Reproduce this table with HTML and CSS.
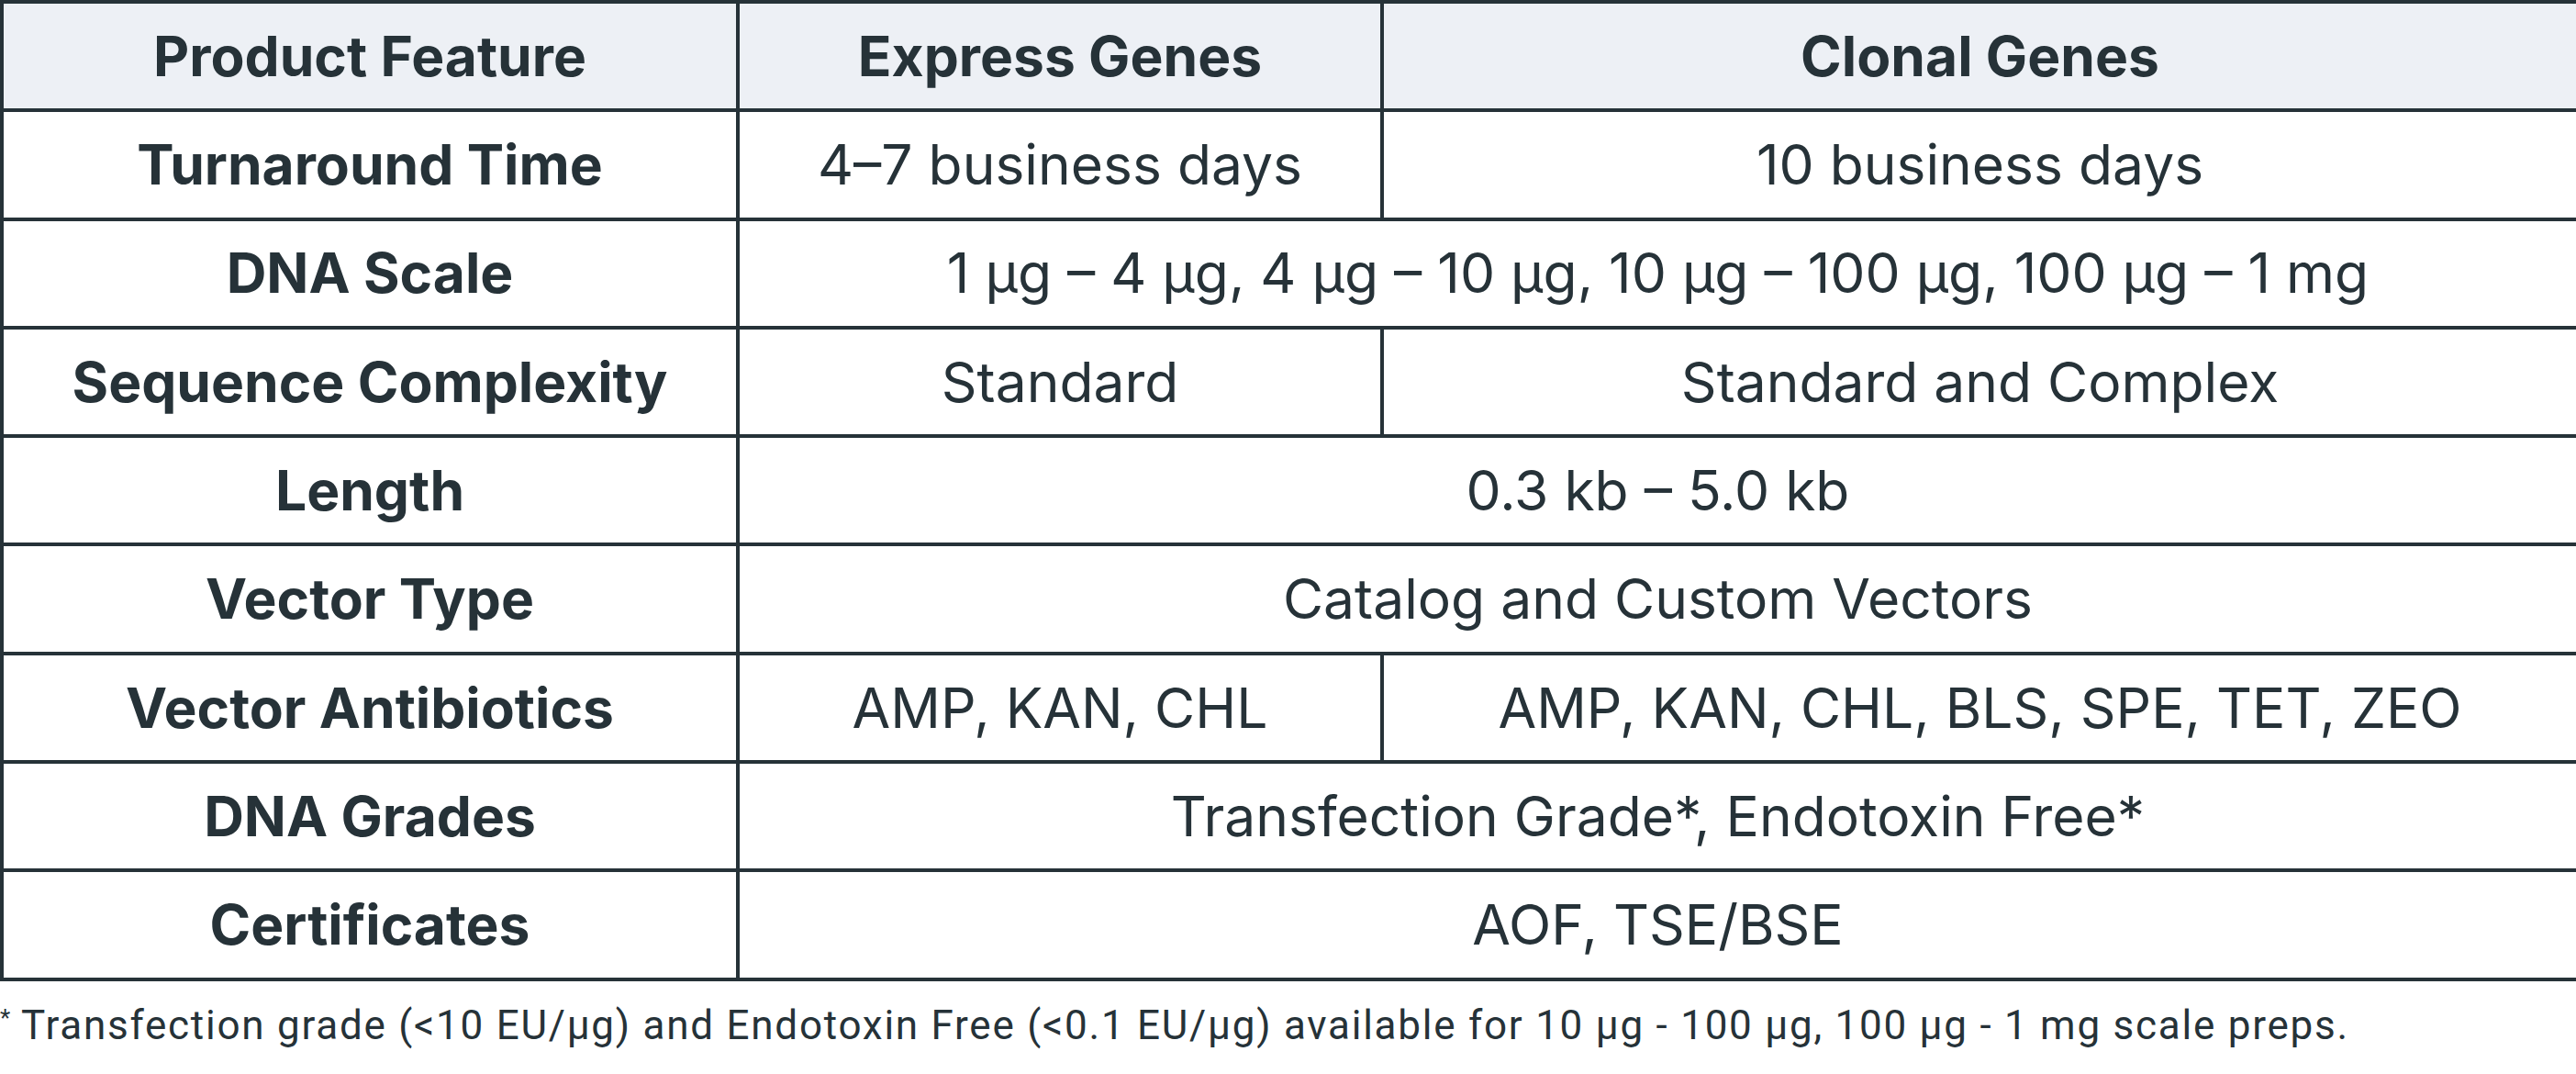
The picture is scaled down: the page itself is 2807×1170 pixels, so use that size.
FILE: index.html
```html
<!DOCTYPE html>
<html lang="en">
<head>
<meta charset="utf-8">
<title>Gene Synthesis Comparison</title>
<link rel="stylesheet" href="styles.css">
</head>
<body>
<table class="compare">
  <colgroup>
    <col class="c1">
    <col class="c2">
    <col class="c3">
  </colgroup>
  <thead>
    <tr>
      <th>Product Feature</th>
      <th>Express Genes</th>
      <th>Clonal Genes</th>
    </tr>
  </thead>
  <tbody>
    <tr>
      <th>Turnaround Time</th>
      <td>4–7 business days</td>
      <td>10 business days</td>
    </tr>
    <tr>
      <th>DNA Scale</th>
      <td colspan="2">1 µg – 4 µg, 4 µg – 10 µg, 10 µg – 100 µg, 100 µg – 1 mg</td>
    </tr>
    <tr>
      <th>Sequence Complexity</th>
      <td>Standard</td>
      <td>Standard and Complex</td>
    </tr>
    <tr>
      <th>Length</th>
      <td colspan="2">0.3 kb – 5.0 kb</td>
    </tr>
    <tr>
      <th>Vector Type</th>
      <td colspan="2">Catalog and Custom Vectors</td>
    </tr>
    <tr>
      <th>Vector Antibiotics</th>
      <td>AMP, KAN, CHL</td>
      <td>AMP, KAN, CHL, BLS, SPE, TET, ZEO</td>
    </tr>
    <tr>
      <th>DNA Grades</th>
      <td colspan="2">Transfection Grade*, Endotoxin Free*</td>
    </tr>
    <tr>
      <th>Certificates</th>
      <td colspan="2">AOF, TSE/BSE</td>
    </tr>
  </tbody>
</table>
<p class="note"><sup>*</sup> Transfection grade (&lt;10 EU/µg) and Endotoxin Free (&lt;0.1 EU/µg) available for 10 µg - 100 µg, 100 µg - 1 mg scale preps.</p>
</body>
</html>
```
FILE: styles.css
```css
html, body {
  margin: 0;
  padding: 0;
  background: #ffffff;
}
body {
  width: 2807px;
  color: #263238;
  font-family: "Inter", "Liberation Sans", sans-serif;
}
.compare {
  width: 2807px;
  border-collapse: collapse;
  table-layout: fixed;
}
.c1 { width: 802px; }
.c2 { width: 702px; }
.c3 { width: 1303px; }
.compare th,
.compare td {
  border: 4px solid #263238;
  height: 114.3px;
  padding: 0;
  text-align: center;
  vertical-align: middle;
  font-size: 60.5px;
  line-height: 1;
}
.compare th {
  font-weight: 700;
}
.compare td {
  font-weight: 400;
}
.compare thead th {
  background: #edf0f5;
}
.note {
  margin: 22px 0 0 0;
  font-family: "Roboto", "Liberation Sans", sans-serif;
  font-size: 44px;
  letter-spacing: 1.75px;
  line-height: 1.2;
  color: #263238;
}
.note sup {
  font-size: 26px;
  vertical-align: 14px;
  line-height: 0;
  letter-spacing: 0;
}
```
